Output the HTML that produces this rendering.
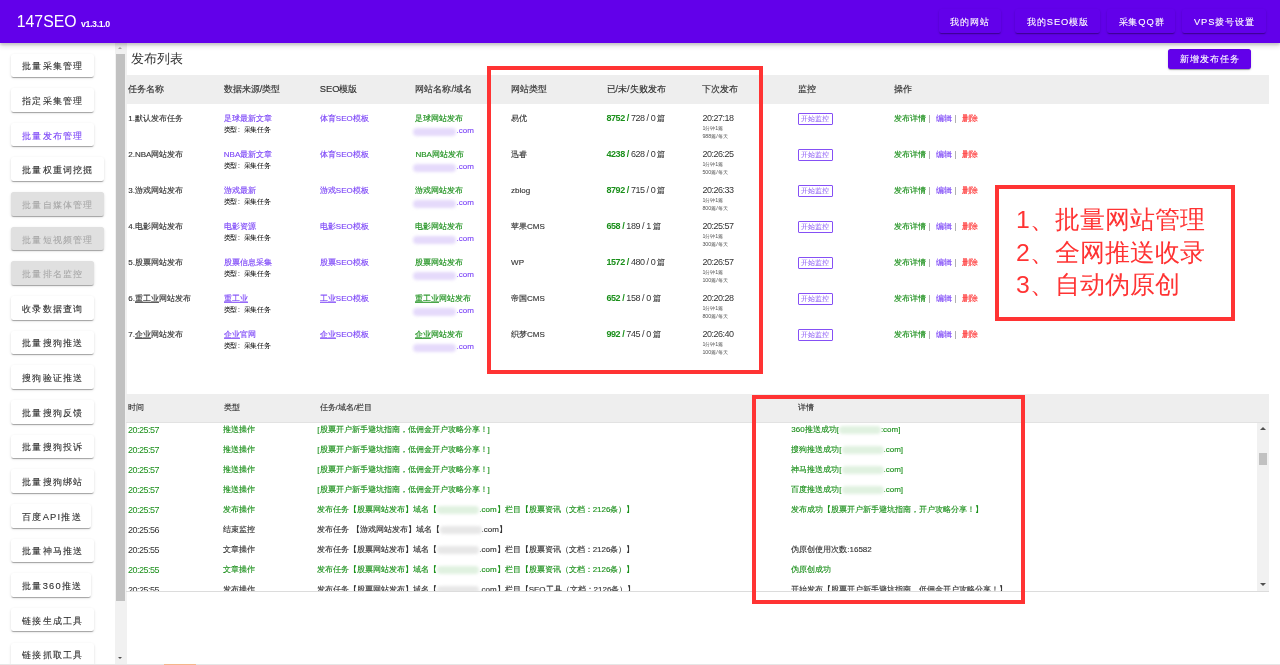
<!DOCTYPE html><html><head><meta charset="utf-8"><style>
*{box-sizing:border-box;margin:0;padding:0}
html,body{width:1280px;height:665px;overflow:hidden;background:#fff}
body{position:relative;font-family:"Liberation Sans",sans-serif;color:#222}
.a{position:absolute;white-space:nowrap;line-height:1}
.hdr{position:absolute;left:0;top:0;width:1280px;height:42.6px;background:#6200ea;box-shadow:0 1.5px 2px rgba(0,0,0,.12),0 3px 5px rgba(0,0,0,.14);z-index:5}
.hb{position:absolute;top:9.3px;height:23.6px;background:#6200ea;border-radius:2.5px;box-shadow:0 2px 1px -1px rgba(0,0,0,.2),0 1px 1px 0 rgba(0,0,0,.14),0 1px 3px 0 rgba(0,0,0,.12);color:#fff;font-size:9.33px;letter-spacing:.9px;line-height:23.6px;-webkit-text-stroke:.1px currentColor;text-align:center;padding-top:2px;padding-left:.9px}
.sb{position:absolute;left:10.8px;height:23.6px;background:#fff;border-radius:2.5px;box-shadow:0 2px 1px -1px rgba(0,0,0,.2),0 1px 1px 0 rgba(0,0,0,.14),0 1px 3px 0 rgba(0,0,0,.12);color:rgba(0,0,0,.82);font-size:9.33px;letter-spacing:1.2px;line-height:23.6px;-webkit-text-stroke:.1px currentColor;padding-left:11.5px;padding-top:1.8px}
.sb.dis{background:#e0e0e0;color:rgba(0,0,0,.24)}
.sb.act{color:#7c45f7}
.th{font-size:9.33px;color:#333;-webkit-text-stroke:.15px currentColor}
.td{font-size:8px;color:#333;-webkit-text-stroke:.13px currentColor}
.tm{font-size:9px;letter-spacing:-.5px;-webkit-text-stroke:0}
.td b{-webkit-text-stroke:0}
.lk{color:#7c45f7}
.gr{color:#1a8f1a}
.rd{color:#ff2b2b}
.sm{font-size:6.67px;letter-spacing:-.35px;color:#000}
.xs{font-size:5.33px;color:#555}
.blur{position:absolute;height:8px;border-radius:4px;filter:blur(1.5px)}
u{text-decoration:none;background-image:linear-gradient(currentColor,currentColor);background-size:100% .8px;background-repeat:no-repeat;background-position:0 8.3px}
.box{position:absolute;border:4.7px solid #ff3333;z-index:10}
</style></head><body><div id="w" style="position:absolute;left:0;top:0;width:1280px;height:665px;will-change:transform">
<div class="hdr">
<div class="a" style="left:16.8px;top:14px;font-size:15.8px;color:#fff">147SEO <span style="font-size:8.8px;font-weight:bold;letter-spacing:-.35px">v1.3.1.0</span></div>
<div class="hb" style="left:938.7px;width:62.3px">我的网站</div>
<div class="hb" style="left:1015px;width:85.2px">我的SEO模版</div>
<div class="hb" style="left:1107px;width:68.2px">采集QQ群</div>
<div class="hb" style="left:1182px;width:84.1px">VPS拨号设置</div>
</div>
<div class="sb" style="top:53.50px;width:83.2px">批量采集管理</div>
<div class="sb" style="top:88.15px;width:83.2px">指定采集管理</div>
<div class="sb act" style="top:122.80px;width:83.2px">批量发布管理</div>
<div class="sb" style="top:157.45px;width:93.2px">批量权重词挖掘</div>
<div class="sb dis" style="top:192.10px;width:93.2px">批量自媒体管理</div>
<div class="sb dis" style="top:226.75px;width:93.2px">批量短视频管理</div>
<div class="sb dis" style="top:261.40px;width:83.2px">批量排名监控</div>
<div class="sb" style="top:296.05px;width:83.2px">收录数据查询</div>
<div class="sb" style="top:330.70px;width:83.2px">批量搜狗推送</div>
<div class="sb" style="top:365.35px;width:83.2px">搜狗验证推送</div>
<div class="sb" style="top:400.00px;width:83.2px">批量搜狗反馈</div>
<div class="sb" style="top:434.65px;width:83.2px">批量搜狗投诉</div>
<div class="sb" style="top:469.30px;width:83.2px">批量搜狗绑站</div>
<div class="sb" style="top:503.95px;width:80.2px">百度API推送</div>
<div class="sb" style="top:538.60px;width:83.2px">批量神马推送</div>
<div class="sb" style="top:573.25px;width:80.2px">批量360推送</div>
<div class="sb" style="top:607.90px;width:83.2px">链接生成工具</div>
<div class="sb" style="top:642.55px;width:83.2px">链接抓取工具</div>
<div class="a" style="left:115px;top:42px;width:11.7px;height:623px;background:#f1f1f1"></div>
<div class="a" style="left:116.1px;top:54.1px;width:8.6px;height:547.3px;background:#c1c1c1"></div>
<div class="a" style="left:117.9px;top:47px;width:0;height:0;border-left:2.6px solid transparent;border-right:2.6px solid transparent;border-bottom:2.8px solid #a3a3a3"></div>
<div class="a" style="left:117.8px;top:657px;width:0;height:0;border-left:2.6px solid transparent;border-right:2.6px solid transparent;border-top:2.6px solid #505050"></div>
<div class="a" style="left:131px;top:51.5px;font-size:13.33px;color:#333">发布列表</div>
<div class="hb" style="left:1168.1px;top:48.6px;width:83px;height:20px;line-height:20px;padding-top:0">新增发布任务</div>
<div class="a" style="left:126px;top:74.5px;width:1143px;height:29.8px;background:#eeeeee"></div>
<div class="a th" style="left:128.3px;top:84.5px">任务名称</div>
<div class="a th" style="left:223.8px;top:84.5px">数据来源/类型</div>
<div class="a th" style="left:319.8px;top:84.5px">SEO模版</div>
<div class="a th" style="left:415.4px;top:84.5px">网站名称/域名</div>
<div class="a th" style="left:511.1px;top:84.5px">网站类型</div>
<div class="a th" style="left:606.5px;top:84.5px">已/未/失败发布</div>
<div class="a th" style="left:702.4px;top:84.5px">下次发布</div>
<div class="a th" style="left:798.3px;top:84.5px">监控</div>
<div class="a th" style="left:894.2px;top:84.5px">操作</div>
<div class="a td" style="left:128.3px;top:114.5px">1.默认发布任务</div>
<div class="a td lk" style="left:223.8px;top:114.5px">足球最新文章</div>
<div class="a sm" style="left:223.8px;top:126.5px">类型<span style="display:inline-block;width:6.5px;padding-left:.8px">:</span>采集任务</div>
<div class="a td lk" style="left:319.8px;top:114.5px">体育SEO模板</div>
<div class="a td gr" style="left:415.4px;top:114.5px">足球网站发布</div>
<div class="blur" style="left:413px;top:127.5px;width:43px;background:rgba(224,212,250,.85)"></div>
<div class="a td lk" style="left:456.5px;top:126.5px">.com</div>
<div class="a td" style="left:511.1px;top:114.5px">易优</div>
<div class="a td" style="left:606.5px;top:114.0px"><span style="font-size:9px;letter-spacing:-.45px;-webkit-text-stroke:0"><b class="gr">8752 /</b> 728 / 0 </span>篇</div>
<div class="a td tm" style="left:702.4px;top:114.0px">20:27:18</div>
<div class="a xs" style="left:702.4px;top:126.0px">1分钟1篇</div>
<div class="a xs" style="left:702.4px;top:133.7px">988篇/每天</div>
<div class="a" style="left:797.9px;top:113.2px;width:35.1px;height:11.6px;border:1px solid #8550f5;border-radius:1px;color:#8550f5;font-size:6.67px;line-height:9.8px;text-align:center">开始监控</div>
<div class="a td" style="left:894.2px;top:114.5px"><span class="gr">发布详情</span><i style="display:inline-block;width:1px;height:8px;background:#b0b0b0;margin:0 5.6px 0 3.2px;vertical-align:-1.8px"></i><span class="lk">编辑</span><i style="display:inline-block;width:1px;height:8px;background:#b0b0b0;margin:0 5.6px 0 3.2px;vertical-align:-1.8px"></i><span class="rd">删除</span></div>
<div class="a td" style="left:128.3px;top:150.5px">2.NBA网站发布</div>
<div class="a td lk" style="left:223.8px;top:150.5px">NBA最新文章</div>
<div class="a sm" style="left:223.8px;top:162.5px">类型<span style="display:inline-block;width:6.5px;padding-left:.8px">:</span>采集任务</div>
<div class="a td lk" style="left:319.8px;top:150.5px">体育SEO模板</div>
<div class="a td gr" style="left:415.4px;top:150.5px">NBA网站发布</div>
<div class="blur" style="left:413px;top:163.5px;width:43px;background:rgba(224,212,250,.85)"></div>
<div class="a td lk" style="left:456.5px;top:162.5px">.com</div>
<div class="a td" style="left:511.1px;top:150.5px">迅睿</div>
<div class="a td" style="left:606.5px;top:150.0px"><span style="font-size:9px;letter-spacing:-.45px;-webkit-text-stroke:0"><b class="gr">4238 /</b> 628 / 0 </span>篇</div>
<div class="a td tm" style="left:702.4px;top:150.0px">20:26:25</div>
<div class="a xs" style="left:702.4px;top:162.0px">1分钟1篇</div>
<div class="a xs" style="left:702.4px;top:169.7px">500篇/每天</div>
<div class="a" style="left:797.9px;top:149.2px;width:35.1px;height:11.6px;border:1px solid #8550f5;border-radius:1px;color:#8550f5;font-size:6.67px;line-height:9.8px;text-align:center">开始监控</div>
<div class="a td" style="left:894.2px;top:150.5px"><span class="gr">发布详情</span><i style="display:inline-block;width:1px;height:8px;background:#b0b0b0;margin:0 5.6px 0 3.2px;vertical-align:-1.8px"></i><span class="lk">编辑</span><i style="display:inline-block;width:1px;height:8px;background:#b0b0b0;margin:0 5.6px 0 3.2px;vertical-align:-1.8px"></i><span class="rd">删除</span></div>
<div class="a td" style="left:128.3px;top:186.5px">3.游戏网站发布</div>
<div class="a td lk" style="left:223.8px;top:186.5px">游戏最新</div>
<div class="a sm" style="left:223.8px;top:198.5px">类型<span style="display:inline-block;width:6.5px;padding-left:.8px">:</span>采集任务</div>
<div class="a td lk" style="left:319.8px;top:186.5px">游戏SEO模板</div>
<div class="a td gr" style="left:415.4px;top:186.5px">游戏网站发布</div>
<div class="blur" style="left:413px;top:199.5px;width:43px;background:rgba(224,212,250,.85)"></div>
<div class="a td lk" style="left:456.5px;top:198.5px">.com</div>
<div class="a td" style="left:511.1px;top:186.5px">zblog</div>
<div class="a td" style="left:606.5px;top:186.0px"><span style="font-size:9px;letter-spacing:-.45px;-webkit-text-stroke:0"><b class="gr">8792 /</b> 715 / 0 </span>篇</div>
<div class="a td tm" style="left:702.4px;top:186.0px">20:26:33</div>
<div class="a xs" style="left:702.4px;top:198.0px">1分钟1篇</div>
<div class="a xs" style="left:702.4px;top:205.7px">800篇/每天</div>
<div class="a" style="left:797.9px;top:185.2px;width:35.1px;height:11.6px;border:1px solid #8550f5;border-radius:1px;color:#8550f5;font-size:6.67px;line-height:9.8px;text-align:center">开始监控</div>
<div class="a td" style="left:894.2px;top:186.5px"><span class="gr">发布详情</span><i style="display:inline-block;width:1px;height:8px;background:#b0b0b0;margin:0 5.6px 0 3.2px;vertical-align:-1.8px"></i><span class="lk">编辑</span><i style="display:inline-block;width:1px;height:8px;background:#b0b0b0;margin:0 5.6px 0 3.2px;vertical-align:-1.8px"></i><span class="rd">删除</span></div>
<div class="a td" style="left:128.3px;top:222.5px">4.电影网站发布</div>
<div class="a td lk" style="left:223.8px;top:222.5px">电影资源</div>
<div class="a sm" style="left:223.8px;top:234.5px">类型<span style="display:inline-block;width:6.5px;padding-left:.8px">:</span>采集任务</div>
<div class="a td lk" style="left:319.8px;top:222.5px">电影SEO模板</div>
<div class="a td gr" style="left:415.4px;top:222.5px">电影网站发布</div>
<div class="blur" style="left:413px;top:235.5px;width:43px;background:rgba(224,212,250,.85)"></div>
<div class="a td lk" style="left:456.5px;top:234.5px">.com</div>
<div class="a td" style="left:511.1px;top:222.5px">苹果CMS</div>
<div class="a td" style="left:606.5px;top:222.0px"><span style="font-size:9px;letter-spacing:-.45px;-webkit-text-stroke:0"><b class="gr">658 /</b> 189 / 1 </span>篇</div>
<div class="a td tm" style="left:702.4px;top:222.0px">20:25:57</div>
<div class="a xs" style="left:702.4px;top:234.0px">1分钟1篇</div>
<div class="a xs" style="left:702.4px;top:241.7px">300篇/每天</div>
<div class="a" style="left:797.9px;top:221.2px;width:35.1px;height:11.6px;border:1px solid #8550f5;border-radius:1px;color:#8550f5;font-size:6.67px;line-height:9.8px;text-align:center">开始监控</div>
<div class="a td" style="left:894.2px;top:222.5px"><span class="gr">发布详情</span><i style="display:inline-block;width:1px;height:8px;background:#b0b0b0;margin:0 5.6px 0 3.2px;vertical-align:-1.8px"></i><span class="lk">编辑</span><i style="display:inline-block;width:1px;height:8px;background:#b0b0b0;margin:0 5.6px 0 3.2px;vertical-align:-1.8px"></i><span class="rd">删除</span></div>
<div class="a td" style="left:128.3px;top:258.5px">5.股票网站发布</div>
<div class="a td lk" style="left:223.8px;top:258.5px">股票信息采集</div>
<div class="a sm" style="left:223.8px;top:270.5px">类型<span style="display:inline-block;width:6.5px;padding-left:.8px">:</span>采集任务</div>
<div class="a td lk" style="left:319.8px;top:258.5px">股票SEO模板</div>
<div class="a td gr" style="left:415.4px;top:258.5px">股票网站发布</div>
<div class="blur" style="left:413px;top:271.5px;width:43px;background:rgba(224,212,250,.85)"></div>
<div class="a td lk" style="left:456.5px;top:270.5px">.com</div>
<div class="a td" style="left:511.1px;top:258.5px">WP</div>
<div class="a td" style="left:606.5px;top:258.0px"><span style="font-size:9px;letter-spacing:-.45px;-webkit-text-stroke:0"><b class="gr">1572 /</b> 480 / 0 </span>篇</div>
<div class="a td tm" style="left:702.4px;top:258.0px">20:26:57</div>
<div class="a xs" style="left:702.4px;top:270.0px">1分钟1篇</div>
<div class="a xs" style="left:702.4px;top:277.7px">100篇/每天</div>
<div class="a" style="left:797.9px;top:257.2px;width:35.1px;height:11.6px;border:1px solid #8550f5;border-radius:1px;color:#8550f5;font-size:6.67px;line-height:9.8px;text-align:center">开始监控</div>
<div class="a td" style="left:894.2px;top:258.5px"><span class="gr">发布详情</span><i style="display:inline-block;width:1px;height:8px;background:#b0b0b0;margin:0 5.6px 0 3.2px;vertical-align:-1.8px"></i><span class="lk">编辑</span><i style="display:inline-block;width:1px;height:8px;background:#b0b0b0;margin:0 5.6px 0 3.2px;vertical-align:-1.8px"></i><span class="rd">删除</span></div>
<div class="a td" style="left:128.3px;top:294.5px">6.<u>重工业</u>网站发布</div>
<div class="a td lk" style="left:223.8px;top:294.5px"><u>重工业</u></div>
<div class="a sm" style="left:223.8px;top:306.5px">类型<span style="display:inline-block;width:6.5px;padding-left:.8px">:</span>采集任务</div>
<div class="a td lk" style="left:319.8px;top:294.5px"><u>工业</u>SEO模板</div>
<div class="a td gr" style="left:415.4px;top:294.5px"><u>重工业</u>网站发布</div>
<div class="blur" style="left:413px;top:307.5px;width:43px;background:rgba(224,212,250,.85)"></div>
<div class="a td lk" style="left:456.5px;top:306.5px">.com</div>
<div class="a td" style="left:511.1px;top:294.5px">帝国CMS</div>
<div class="a td" style="left:606.5px;top:294.0px"><span style="font-size:9px;letter-spacing:-.45px;-webkit-text-stroke:0"><b class="gr">652 /</b> 158 / 0 </span>篇</div>
<div class="a td tm" style="left:702.4px;top:294.0px">20:20:28</div>
<div class="a xs" style="left:702.4px;top:306.0px">1分钟1篇</div>
<div class="a xs" style="left:702.4px;top:313.7px">800篇/每天</div>
<div class="a" style="left:797.9px;top:293.2px;width:35.1px;height:11.6px;border:1px solid #8550f5;border-radius:1px;color:#8550f5;font-size:6.67px;line-height:9.8px;text-align:center">开始监控</div>
<div class="a td" style="left:894.2px;top:294.5px"><span class="gr">发布详情</span><i style="display:inline-block;width:1px;height:8px;background:#b0b0b0;margin:0 5.6px 0 3.2px;vertical-align:-1.8px"></i><span class="lk">编辑</span><i style="display:inline-block;width:1px;height:8px;background:#b0b0b0;margin:0 5.6px 0 3.2px;vertical-align:-1.8px"></i><span class="rd">删除</span></div>
<div class="a td" style="left:128.3px;top:330.5px">7.<u>企业</u>网站发布</div>
<div class="a td lk" style="left:223.8px;top:330.5px"><u>企业</u>官网</div>
<div class="a sm" style="left:223.8px;top:342.5px">类型<span style="display:inline-block;width:6.5px;padding-left:.8px">:</span>采集任务</div>
<div class="a td lk" style="left:319.8px;top:330.5px"><u>企业</u>SEO模板</div>
<div class="a td gr" style="left:415.4px;top:330.5px"><u>企业</u>网站发布</div>
<div class="blur" style="left:413px;top:343.5px;width:43px;background:rgba(224,212,250,.85)"></div>
<div class="a td lk" style="left:456.5px;top:342.5px">.com</div>
<div class="a td" style="left:511.1px;top:330.5px">织梦CMS</div>
<div class="a td" style="left:606.5px;top:330.0px"><span style="font-size:9px;letter-spacing:-.45px;-webkit-text-stroke:0"><b class="gr">992 /</b> 745 / 0 </span>篇</div>
<div class="a td tm" style="left:702.4px;top:330.0px">20:26:40</div>
<div class="a xs" style="left:702.4px;top:342.0px">1分钟1篇</div>
<div class="a xs" style="left:702.4px;top:349.7px">100篇/每天</div>
<div class="a" style="left:797.9px;top:329.2px;width:35.1px;height:11.6px;border:1px solid #8550f5;border-radius:1px;color:#8550f5;font-size:6.67px;line-height:9.8px;text-align:center">开始监控</div>
<div class="a td" style="left:894.2px;top:330.5px"><span class="gr">发布详情</span><i style="display:inline-block;width:1px;height:8px;background:#b0b0b0;margin:0 5.6px 0 3.2px;vertical-align:-1.8px"></i><span class="lk">编辑</span><i style="display:inline-block;width:1px;height:8px;background:#b0b0b0;margin:0 5.6px 0 3.2px;vertical-align:-1.8px"></i><span class="rd">删除</span></div>
<div class="a" style="left:126px;top:393.8px;width:1143px;height:29.2px;background:#eeeeee;border-bottom:1px solid #e2e2e2"></div>
<div class="a td" style="left:127.9px;top:404.2px">时间</div>
<div class="a td" style="left:224px;top:404.2px">类型</div>
<div class="a td" style="left:319.5px;top:404.2px">任务/域名/栏目</div>
<div class="a td" style="left:798px;top:404.2px">详情</div>
<div class="a" style="left:126px;top:423px;width:1143px;height:168.5px;overflow:hidden">
<div class="a td tm gr" style="left:1.9px;top:2.8px">20:25:57</div>
<div class="a td gr" style="left:97.3px;top:3.3px">推送操作</div>
<div class="a td gr" style="left:191.3px;top:3.3px">[股票开户新手避坑指南，低佣金开户攻略分享！]</div>
<div class="a td gr" style="left:665.3px;top:3.3px">360推送成功[<span style="display:inline-block;width:42px;height:8px;vertical-align:middle;border-radius:4px;filter:blur(1.5px);background:rgba(222,240,222,.95)"></span>:com]</div>
<div class="a td tm gr" style="left:1.9px;top:22.8px">20:25:57</div>
<div class="a td gr" style="left:97.3px;top:23.3px">推送操作</div>
<div class="a td gr" style="left:191.3px;top:23.3px">[股票开户新手避坑指南，低佣金开户攻略分享！]</div>
<div class="a td gr" style="left:665.3px;top:23.3px">搜狗推送成功[<span style="display:inline-block;width:42px;height:8px;vertical-align:middle;border-radius:4px;filter:blur(1.5px);background:rgba(222,240,222,.95)"></span>.com]</div>
<div class="a td tm gr" style="left:1.9px;top:42.8px">20:25:57</div>
<div class="a td gr" style="left:97.3px;top:43.3px">推送操作</div>
<div class="a td gr" style="left:191.3px;top:43.3px">[股票开户新手避坑指南，低佣金开户攻略分享！]</div>
<div class="a td gr" style="left:665.3px;top:43.3px">神马推送成功[<span style="display:inline-block;width:42px;height:8px;vertical-align:middle;border-radius:4px;filter:blur(1.5px);background:rgba(222,240,222,.95)"></span>.com]</div>
<div class="a td tm gr" style="left:1.9px;top:62.8px">20:25:57</div>
<div class="a td gr" style="left:97.3px;top:63.3px">推送操作</div>
<div class="a td gr" style="left:191.3px;top:63.3px">[股票开户新手避坑指南，低佣金开户攻略分享！]</div>
<div class="a td gr" style="left:665.3px;top:63.3px">百度推送成功[<span style="display:inline-block;width:42px;height:8px;vertical-align:middle;border-radius:4px;filter:blur(1.5px);background:rgba(222,240,222,.95)"></span>.com]</div>
<div class="a td tm gr" style="left:1.9px;top:82.8px">20:25:57</div>
<div class="a td gr" style="left:97.3px;top:83.3px">发布操作</div>
<div class="a td gr" style="left:191.3px;top:83.3px">发布任务【股票网站发布】域名【<span style="display:inline-block;width:42px;height:8px;vertical-align:middle;border-radius:4px;filter:blur(1.5px);background:rgba(222,240,222,.95)"></span>.com】栏目【股票资讯（文档：2126条）】</div>
<div class="a td gr" style="left:665.3px;top:83.3px">发布成功【股票开户新手避坑指南，开户攻略分享！】</div>
<div class="a td tm " style="left:1.9px;top:102.8px">20:25:56</div>
<div class="a td " style="left:97.3px;top:103.3px">结束监控</div>
<div class="a td " style="left:191.3px;top:103.3px">发布任务 【游戏网站发布】域名【<span style="display:inline-block;width:42px;height:8px;vertical-align:middle;border-radius:4px;filter:blur(1.5px);background:rgba(230,230,230,.95)"></span>.com】</div>
<div class="a td " style="left:665.3px;top:103.3px"></div>
<div class="a td tm " style="left:1.9px;top:122.8px">20:25:55</div>
<div class="a td " style="left:97.3px;top:123.3px">文章操作</div>
<div class="a td " style="left:191.3px;top:123.3px">发布任务【股票网站发布】域名【<span style="display:inline-block;width:42px;height:8px;vertical-align:middle;border-radius:4px;filter:blur(1.5px);background:rgba(230,230,230,.95)"></span>.com】栏目【股票资讯（文档：2126条）】</div>
<div class="a td " style="left:665.3px;top:123.3px">伪原创使用次数:16582</div>
<div class="a td tm gr" style="left:1.9px;top:142.8px">20:25:55</div>
<div class="a td gr" style="left:97.3px;top:143.3px">文章操作</div>
<div class="a td gr" style="left:191.3px;top:143.3px">发布任务【股票网站发布】域名【<span style="display:inline-block;width:42px;height:8px;vertical-align:middle;border-radius:4px;filter:blur(1.5px);background:rgba(222,240,222,.95)"></span>.com】栏目【股票资讯（文档：2126条）】</div>
<div class="a td gr" style="left:665.3px;top:143.3px">伪原创成功</div>
<div class="a td tm " style="left:1.9px;top:162.8px">20:25:55</div>
<div class="a td " style="left:97.3px;top:163.3px">发布操作</div>
<div class="a td " style="left:191.3px;top:163.3px">发布任务【股票网站发布】域名【<span style="display:inline-block;width:42px;height:8px;vertical-align:middle;border-radius:4px;filter:blur(1.5px);background:rgba(230,230,230,.95)"></span>.com】栏目【SEO工具（文档：2126条）】</div>
<div class="a td " style="left:665.3px;top:163.3px">开始发布【股票开户新手避坑指南，低佣金开户攻略分享！】</div>
</div>
<div class="a" style="left:126px;top:591px;width:1143px;height:1px;background:#dcdcdc"></div>
<div class="a" style="left:1257px;top:423px;width:12px;height:168px;background:#f1f1f1"></div>
<div class="a" style="left:1259px;top:453.2px;width:8.4px;height:11.8px;background:#c1c1c1"></div>
<div class="a" style="left:1259.5px;top:427px;width:0;height:0;border-left:3.5px solid transparent;border-right:3.5px solid transparent;border-bottom:3.5px solid #505050"></div>
<div class="a" style="left:1259.5px;top:583px;width:0;height:0;border-left:3.5px solid transparent;border-right:3.5px solid transparent;border-top:3.5px solid #505050"></div>
<div class="a" style="left:0;top:664px;width:1280px;height:1px;background:#e6e6e6"></div>
<div class="a" style="left:164px;top:663.5px;width:32px;height:2px;background:#f5b78a"></div>
<div class="box" style="left:487px;top:66.3px;width:276px;height:307.4px"></div>
<div class="box" style="left:995px;top:185px;width:239.7px;height:135.5px"></div>
<div class="box" style="left:752px;top:395px;width:272.7px;height:208.7px"></div>
<div class="a" style="left:1016px;top:204px;font-size:24.8px;line-height:32.5px;color:#ff3333;z-index:11">1、批量网站管理<br>2、全网推送收录<br>3、自动伪原创</div>
</div></body></html>
